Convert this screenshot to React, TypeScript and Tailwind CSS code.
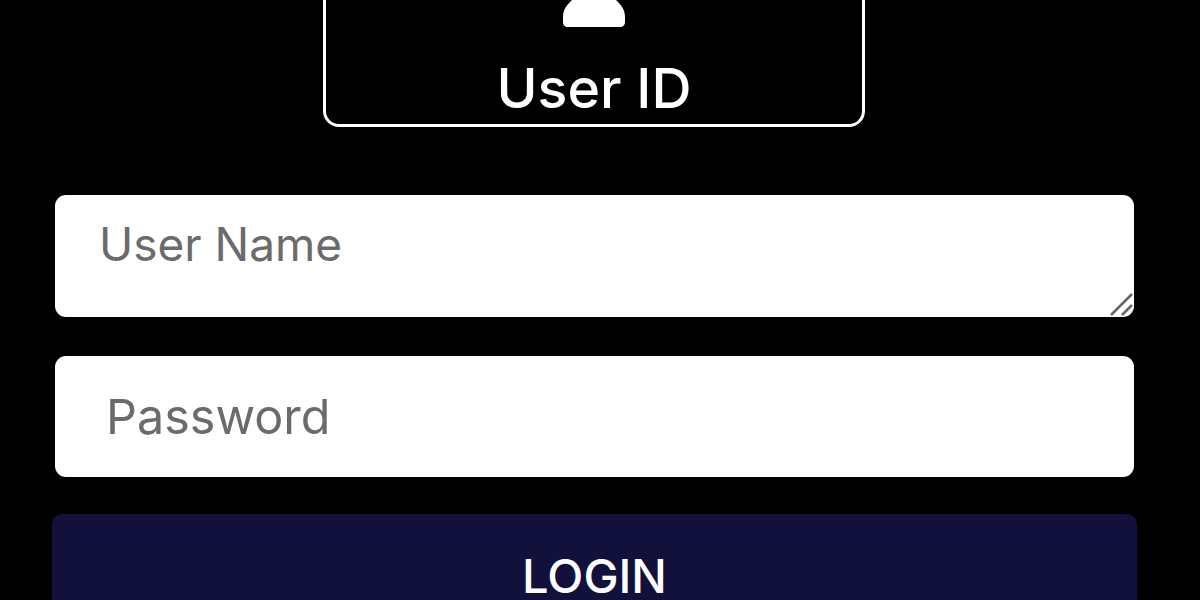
export default function App() {
  return (
    <div className="h-[600px] w-[1200px] overflow-hidden bg-black font-['Inter',sans-serif]">
      <div className="mt-[-73px] ml-[323px] flex h-[200px] w-[542px] flex-col items-center justify-end rounded-[16px] border-[3px] border-white pb-[6px]">
        <svg width="64" height="40" viewBox="0 0 64 40" className="mb-[31px]" fill="#fff">
          <path d="M22 0h20l12 13c5 5 9 9 9 17v5c0 3-2 5-5 5H6c-3 0-5-2-5-5v-5c0-8 4-12 9-17z" />
        </svg>
        <div className="text-[55.500px] leading-[60px] font-[550] text-white">User ID</div>
      </div>

      <div className="mt-[68px] flex flex-col pr-[66px] pl-[55px]">
        <div className="relative">
          <textarea
            placeholder="User Name"
            className="block h-[122px] w-full resize-none rounded-[11px] bg-white px-[44px] py-[23px] text-[46px] leading-[52px] text-[#6b6b6b] outline-none placeholder:text-[#6b6b6b]"
          />
          <svg width="26" height="26" viewBox="0 0 26 26" className="absolute right-0 bottom-0" stroke="#666" strokeWidth="2.5" fill="none">
            <path d="M3 24 24 3M14 24l10-10" />
          </svg>
        </div>
        <input
          placeholder="Password"
          className="mt-[39px] block h-[121px] w-full rounded-[11px] bg-white px-[51px] text-[48.500px] text-[#6b6b6b] outline-none placeholder:text-[#6b6b6b]"
        />
      </div>

      <button className="mt-[37px] ml-[52px] flex h-[140px] w-[1085px] justify-center rounded-[10px] bg-[#11113b] pt-[34px] text-[47px] leading-[56px] font-medium text-white">
        LOGIN
      </button>
    </div>
  );
}
